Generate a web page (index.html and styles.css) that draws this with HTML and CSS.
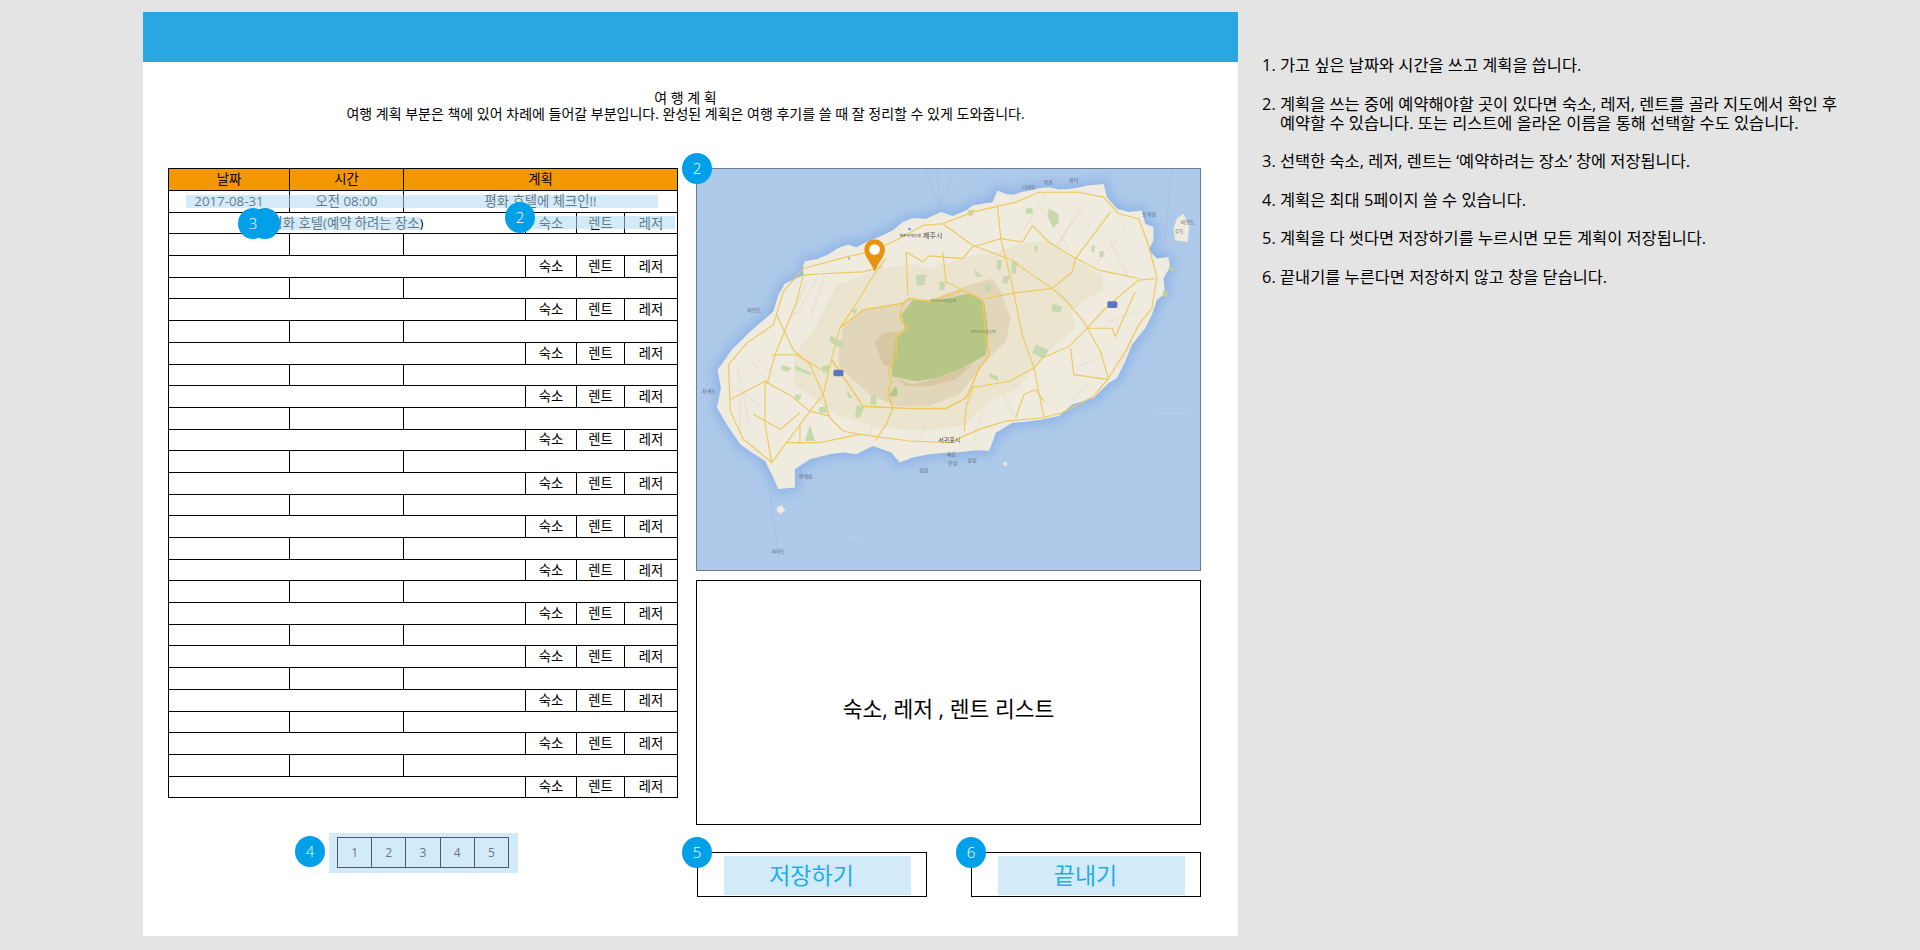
FILE: index.html
```html
<!DOCTYPE html>
<html lang="ko">
<head>
    <meta charset="UTF-8">
    <meta name="viewport" content="width=device-width, initial-scale=1.0">
    <title>여행 계획</title>
    <link rel="stylesheet" href="styles.css">
</head>
<body>
    <div class="wrap">
        <div class="page">
            <div class="topbar"></div>

            <div class="intro">
                <p>여 행 계 획</p>
                <p>여행 계획 부분은 책에 있어 차례에 들어갈 부분입니다. 완성된 계획은 여행 후기를 쓸 때 잘 정리할 수 있게 도와줍니다.</p>
            </div>

            <div class="work">
                <div class="left">
                    <div class="plan">
                        <table class="plan-table">
                            <colgroup>
                                <col class="c1"><col class="c2"><col class="c3"><col class="c4"><col class="c5"><col class="c6">
                            </colgroup>
                            <tr class="head"><th>날짜</th><th>시간</th><th colspan="4">계획</th></tr>
                            <tr><td>2017-08-31</td><td>오전 08:00</td><td colspan="4">평화 호텔에 체크인!!</td></tr>
                            <tr><td colspan="3">평화 호텔(예약 하려는 장소)</td><td>숙소</td><td>렌트</td><td>레저</td></tr>
                            <tr><td></td><td></td><td colspan="4"></td></tr>
                            <tr><td colspan="3"></td><td>숙소</td><td>렌트</td><td>레저</td></tr>
                            <tr><td></td><td></td><td colspan="4"></td></tr>
                            <tr><td colspan="3"></td><td>숙소</td><td>렌트</td><td>레저</td></tr>
                            <tr><td></td><td></td><td colspan="4"></td></tr>
                            <tr><td colspan="3"></td><td>숙소</td><td>렌트</td><td>레저</td></tr>
                            <tr><td></td><td></td><td colspan="4"></td></tr>
                            <tr><td colspan="3"></td><td>숙소</td><td>렌트</td><td>레저</td></tr>
                            <tr><td></td><td></td><td colspan="4"></td></tr>
                            <tr><td colspan="3"></td><td>숙소</td><td>렌트</td><td>레저</td></tr>
                            <tr><td></td><td></td><td colspan="4"></td></tr>
                            <tr><td colspan="3"></td><td>숙소</td><td>렌트</td><td>레저</td></tr>
                            <tr><td></td><td></td><td colspan="4"></td></tr>
                            <tr><td colspan="3"></td><td>숙소</td><td>렌트</td><td>레저</td></tr>
                            <tr><td></td><td></td><td colspan="4"></td></tr>
                            <tr><td colspan="3"></td><td>숙소</td><td>렌트</td><td>레저</td></tr>
                            <tr><td></td><td></td><td colspan="4"></td></tr>
                            <tr><td colspan="3"></td><td>숙소</td><td>렌트</td><td>레저</td></tr>
                            <tr><td></td><td></td><td colspan="4"></td></tr>
                            <tr><td colspan="3"></td><td>숙소</td><td>렌트</td><td>레저</td></tr>
                            <tr><td></td><td></td><td colspan="4"></td></tr>
                            <tr><td colspan="3"></td><td>숙소</td><td>렌트</td><td>레저</td></tr>
                            <tr><td></td><td></td><td colspan="4"></td></tr>
                            <tr><td colspan="3"></td><td>숙소</td><td>렌트</td><td>레저</td></tr>
                            <tr><td></td><td></td><td colspan="4"></td></tr>
                            <tr><td colspan="3"></td><td>숙소</td><td>렌트</td><td>레저</td></tr>
                        </table>

                        <!-- highlights over the filled in rows -->
                        <div class="mark mark-row"></div>
                        <div class="mark mark-place"></div>
                        <div class="mark mark-kinds"></div>

                        <span class="badge badge-3b"></span>
                        <span class="badge badge-3">3</span>
                        <span class="badge badge-2">2</span>
                    </div>

                    <div class="pager-row">
                        <span class="badge badge-4">4</span>
                        <div class="pager">
                            <span>1</span><span>2</span><span>3</span><span>4</span><span>5</span>
                        </div>
                    </div>
                </div>

                <div class="right">
                    <div class="map">
                        <svg class="map-svg" viewBox="0 0 1515 1209" preserveAspectRatio="none" xmlns="http://www.w3.org/2000/svg">
                            <defs>
                                <filter id="glow" x="-10%" y="-10%" width="120%" height="120%"><feGaussianBlur stdDeviation="18"/></filter>
                                <filter id="soft" x="-5%" y="-5%" width="110%" height="110%"><feGaussianBlur stdDeviation="1.3"/></filter>
                                <path id="coast" d="M320,290 L325,278 360,272 395,258 425,238 455,228 480,236 500,225 530,212 560,200 590,185 620,160 650,148 690,150 735,130 770,142 810,125 830,110 860,105 890,100 905,65 930,75 955,78 975,70 1000,65 1030,58 1060,55 1090,62 1120,60 1150,56 1175,50 1225,45 1235,85 1265,120 1300,130 1340,125 1350,165 1375,175 1375,215 1360,245 1385,270 1420,265 1425,295 1405,330 1410,375 1385,395 1370,440 1350,480 1310,530 1290,580 1265,630 1240,645 1195,690 1130,710 1090,745 1040,755 990,762 950,765 900,795 880,850 850,848 820,850 780,855 740,856 700,860 650,870 610,885 585,855 530,835 480,860 440,855 400,860 340,875 295,905 295,960 245,965 225,920 205,880 165,855 130,830 90,770 60,720 72,660 62,605 105,545 155,495 195,460 230,430 245,380 265,345 320,320 Z"/>
                            </defs>

                            <rect width="1515" height="1209" fill="#aec9e9"/>
                            <use href="#coast" fill="#8db4e6" stroke="#8db4e6" stroke-width="26" filter="url(#glow)"/>

                            <!-- ferry lines and tile edges on the sea -->
                            <g fill="none" stroke="#9db7d8" stroke-width="1.5">
                                <path d="M685,0 L730,112 M725,0 L730,112 M780,0 L730,112 M1428,0 L1405,270 M215,940 L245,1170"/>
                                <path d="M455,1175 L455,1108 500,1108 M1383,900 L1383,738 1480,738" stroke="#c1d5ee"/>
                            </g>

                            <g filter="url(#soft)">
                                <use href="#coast" fill="#efebdf"/>
                                <path d="M1445,150 L1465,135 1482,170 1478,220 1440,215 1435,180 Z M242,1020 L255,1014 266,1028 252,1040 240,1030 Z M923,884 L933,884 933,894 923,894 Z" fill="#efebdf"/>

                                <!-- hallasan height bands -->
                                <path d="M290,650 L295,560 360,470 420,350 560,300 640,285 700,300 830,260 900,250 990,220 1060,220 1130,270 1220,320 1225,365 1160,400 1130,430 1140,480 1080,530 1020,590 970,660 880,700 810,770 700,790 540,780 420,740 350,690 Z" fill="#ebe5d0"/>
                                <path d="M425,565 L440,480 500,425 610,405 640,390 700,395 820,350 890,330 915,370 945,450 930,520 880,570 840,620 790,680 700,715 600,715 520,680 430,600 Z" fill="#e2d6ba"/>
                                <path d="M535,520 L560,495 610,490 590,600 560,590 Z M600,630 L650,650 710,635 830,590 780,635 700,655 630,655 Z" fill="#d9c6a3"/>
                                <path d="M615,440 L650,395 730,395 820,375 865,400 878,500 870,560 800,600 720,630 660,640 585,625 595,520 625,480 Z" fill="#b6c684"/>
                                <path d="M578,680 L600,655 605,680 590,688 Z" fill="#b6c684"/>

                                <!-- patches of forest -->
                                <path d="M1060,118 L1088,135 1090,160 1072,178 1056,140 Z M990,118 L1010,118 1012,135 992,135 Z M815,125 L835,122 830,142 815,140 Z M1020,530 L1060,545 1045,572 1010,555 Z M1070,405 L1100,415 1095,432 1068,428 Z M255,590 L285,600 275,612 255,605 Z M295,592 L345,615 345,622 295,605 Z M375,595 L400,590 395,612 380,615 Z M325,820 L340,772 356,820 Z M480,712 L505,715 490,752 476,748 Z M525,680 L540,680 540,712 522,710 Z M450,665 L470,690 455,690 Z M400,500 L450,530 430,540 400,520 Z M465,425 L485,420 475,440 Z M660,320 L690,318 685,350 662,350 Z M730,340 L748,340 745,365 730,365 Z M835,300 L860,325 840,325 Z M870,345 L890,350 880,372 866,370 Z M903,275 L918,275 915,305 905,305 Z M948,280 L965,280 960,315 948,315 Z M922,325 L942,320 935,345 920,345 Z M880,615 L905,625 910,640 885,632 Z M1016,232 L1026,230 1024,248 1016,248 Z M1188,232 L1198,230 1196,250 1188,250 Z M1212,248 L1226,248 1224,265 1212,265 Z M295,680 L315,680 310,695 296,695 Z M368,718 L390,716 390,735 368,735 Z" fill="#c6d8ad"/>
                                <path d="M1405,365 L1420,370 1416,388 1402,384 Z M1420,290 L1440,302 1428,310 Z" fill="#b9cf9c"/>

                                <!-- small roads -->
                                <g fill="none" stroke="#d6d1c1" stroke-width="1.5">
                                    <path d="M330,340 L290,440 M385,320 L340,450 M120,590 L160,780 M150,560 L230,660 M100,650 L200,720 M1040,120 L1120,240 M1240,210 L1300,330 M1170,110 L1080,230 M1240,460 L1320,430 M1140,600 L1230,560 M980,190 L1050,75 M860,730 L830,830 M690,750 L675,815 M540,740 L520,805 M1050,300 L1150,120 M1180,640 L1130,700 M920,680 L960,750 M130,680 L130,800 M250,640 L170,560 M300,440 L360,330 M1290,180 L1200,290 M1310,520 L1270,600 M930,560 L960,620"/>
                                </g>

                                <!-- main roads -->
                                <g fill="none" stroke="#edc95f" stroke-width="3.5" stroke-linejoin="round">
                                    <path d="M95,590 L150,525 230,470 260,370 320,300 450,265 520,250 600,215 680,170 740,165 830,130 960,100 1030,70 1150,70 1225,85 1270,135 1330,150 1360,230 1385,325 1370,420 1330,470 1290,550 1240,630 1195,685 1100,735 1040,750 930,760 850,785 760,825 640,820 490,800 370,825 270,825 225,885 140,815 100,730 95,590"/>
                                    <path d="M430,480 L470,420 545,300 570,270"/>
                                    <path d="M630,250 L635,380"/>
                                    <path d="M740,250 L750,340 800,365"/>
                                    <path d="M905,110 L915,210 945,330 980,500 1015,600 1045,750"/>
                                    <path d="M870,390 L950,375 1070,360 1130,310 1140,270 1245,130"/>
                                    <path d="M1070,360 L1110,395 1165,460 1215,550 1240,635"/>
                                    <path d="M1380,330 L1330,335 1240,410 1175,480 1120,535 1040,570 1015,600 940,640 825,660"/>
                                    <path d="M1140,268 L1210,305 1330,330"/>
                                    <path d="M740,165 L830,230 950,275 1010,320 1070,360"/>
                                    <path d="M320,320 L390,315 500,310 560,295"/>
                                    <path d="M630,250 L680,280 700,262 800,270 830,235 915,210 980,220 1010,170 1060,220 1140,270"/>
                                    <path d="M590,720 L570,770 535,820"/>
                                    <path d="M830,660 L810,720 805,790"/>
                                    <path d="M240,440 L290,545 340,590 380,680 400,750 440,790 490,800"/>
                                    <path d="M100,695 L205,640 285,685 340,730 400,745"/>
                                    <path d="M170,740 L250,785 310,735"/>
                                    <path d="M205,640 L205,770 225,885"/>
                                    <path d="M225,560 L300,560 375,605"/>
                                    <path d="M320,320 L300,400 235,560 210,650"/>
                                    <path d="M430,480 L405,575 380,680 340,730 270,825"/>
                                    <path d="M1125,540 L1135,620 1240,635"/>
                                    <path d="M1175,480 L1250,480 1260,505 1320,370"/>
                                    <path d="M960,750 L985,680 1020,665 1045,700"/>
                                    <path d="M310,770 L310,825 360,825"/>
                                </g>

                                <!-- roads round the mountain -->
                                <g fill="none" stroke="#f0c65a" stroke-width="4.5" stroke-linejoin="round">
                                    <path d="M430,480 L500,425 620,405 640,390 700,400 800,365 860,395 870,500 880,560 850,600 825,660 810,690 750,722 640,722 590,720 500,715 440,625 405,575"/>
                                    <path d="M620,405 L610,450 635,480 600,500 600,560 575,610 585,640 575,680 590,720"/>
                                </g>
                            </g>

                            <!-- route shields -->
                            <rect x="411" y="605" width="30" height="20" rx="5" fill="#5a78c0"/>
                            <rect x="1236" y="399" width="30" height="20" rx="5" fill="#5a78c0"/>
                            <circle cx="640" cy="181" r="4" fill="#3aa6e8"/>
                            <circle cx="458" cy="270" r="3" fill="#6f9fe0"/>

                            <g class="map-labels">
                                <text x="710" y="207" class="city">제주시</text>
                                <text x="642" y="205" class="tiny">제주국제공항</text>
                                <text x="760" y="823" class="city2">서귀포시</text>
                                <text x="742" y="401" class="park">한라산국립공원</text>
                                <text x="862" y="493" class="park">한라산국립공원</text>
                                <text x="172" y="431">비양도</text>
                                <text x="36" y="676">차귀도</text>
                                <text x="327" y="933">형제섬</text>
                                <text x="683" y="913">범섬</text>
                                <text x="765" y="866">새섬</text>
                                <text x="770" y="891">문섬</text>
                                <text x="828" y="883">섶섬</text>
                                <text x="245" y="1157">마라도</text>
                                <text x="1362" y="142">토끼섬</text>
                                <text x="1453" y="192">우도</text>
                                <text x="1478" y="166">비양도</text>
                                <text x="1000" y="61">다려도</text>
                                <text x="1058" y="46">북촌</text>
                                <text x="1135" y="38">함덕</text>
                            </g>

                            <!-- selected place -->
                            <path d="M535,310 C524,280 504,265 504,243 A31,31 0 0 1 566,243 C566,265 546,280 535,310 Z" fill="#ea9310"/>
                            <circle cx="535" cy="243" r="16" fill="#fff"/>
                        </svg>
                        <span class="badge badge-corner">2</span>
                    </div>

                    <div class="list-box">숙소, 레저 , 렌트 리스트</div>

                    <div class="actions">
                        <div class="action">
                            <span class="badge badge-corner">5</span>
                            <button class="action-btn">저장하기</button>
                        </div>
                        <div class="action">
                            <span class="badge badge-corner">6</span>
                            <button class="action-btn">끝내기</button>
                        </div>
                    </div>
                </div>
            </div>
        </div>

        <ol class="notes">
            <li>가고 싶은 날짜와 시간을 쓰고 계획을 씁니다.</li>
            <li>계획을 쓰는 중에 예약해야할 곳이 있다면 숙소, 레저, 렌트를 골라 지도에서 확인 후 예약할 수 있습니다. 또는 리스트에 올라온 이름을 통해 선택할 수도 있습니다.</li>
            <li>선택한 숙소, 레저, 렌트는 ‘예약하려는 장소’ 창에 저장됩니다.</li>
            <li>계획은 최대 5페이지 쓸 수 있습니다.</li>
            <li>계획을 다 썻다면 저장하기를 누르시면 모든 계획이 저장됩니다.</li>
            <li>끝내기를 누른다면 저장하지 않고 창을 닫습니다.</li>
        </ol>
    </div>
</body>
</html>
```

FILE: styles.css
```css
* {
    box-sizing: border-box;
}
html, body {
    height: 100%;
}
body {
    margin: 0;
    background-color: #e4e4e4;
    color: #000;
    font-family: "Open Sans", "Noto Sans CJK KR", sans-serif;
    overflow: hidden;
}
.wrap {
    display: flex;
    padding: 12px 0 0 143px;
}
.page {
    width: 1095px;
    height: 924px;
    background-color: #fff;
    flex-shrink: 0;
}
.topbar {
    height: 50px;
    background-color: #29a7e1;
}
.intro {
    padding: 28px 10px 0 0;
    height: 106px;
    text-align: center;
    font-size: 14px;
    line-height: 16px;
}
.intro p {
    margin: 0;
}

.work {
    display: flex;
    gap: 19px;
    padding-left: 25px;
}
.left {
    width: 509px;
}
.right {
    width: 505px;
    display: flex;
    flex-direction: column;
}

/* plan table */
.plan {
    position: relative;
}
.plan-table {
    width: 509px;
    table-layout: fixed;
    border-collapse: collapse;
    font-size: 13.3px;
}
.plan-table .c1 { width: 121px; }
.plan-table .c2 { width: 114px; }
.plan-table .c3 { width: 122px; }
.plan-table .c4 { width: 51px; }
.plan-table .c5 { width: 48px; }
.plan-table .c6 { width: 53px; }
.plan-table tr {
    height: 21.7px;
}
.plan-table th, .plan-table td {
    border: 1px solid #000;
    padding: 0 0 1px;
    text-align: center;
    font-weight: 400;
    line-height: 14px;
}
.plan-table .head {
    height: 22px;
}
.plan-table th {
    background-color: #f39800;
}

.mark {
    position: absolute;
    background-color: rgba(175, 219, 244, 0.55);
}
.mark-row {
    left: 18px;
    top: 27px;
    width: 472px;
    height: 13px;
}
.mark-place {
    left: 98px;
    top: 49px;
    width: 155px;
    height: 13px;
}
.mark-kinds {
    left: 365px;
    top: 48px;
    width: 142px;
    height: 13px;
}

/* numbered markers */
.badge {
    position: absolute;
    width: 30px;
    height: 31px;
    border-radius: 50%;
    background-color: #00a0e9;
    color: #fff;
    font-size: 15px;
    font-weight: 300;
    line-height: 31px;
    text-align: center;
    z-index: 2;
}
.badge-3 { left: 70px; top: 40px; }
.badge-3b { left: 82px; top: 40px; }
.badge-2 { left: 337px; top: 34px; }
.badge-4 { left: 127px; top: 3px; }
.badge-corner { left: -15px; top: -16px; }
.action .badge-corner { left: -16px; }

/* pager */
.pager-row {
    position: relative;
    display: flex;
    justify-content: center;
    margin-top: 35px;
    padding-left: 2px;
}
.pager {
    display: flex;
    width: 189px;
    height: 40px;
    padding: 4px 9px 5px 8px;
    background-color: #d3ebf9;
}
.pager span {
    flex: 1;
    border: 1px solid #4a5a68;
    border-left-width: 0;
    color: #6a7680;
    font-size: 12px;
    line-height: 29px;
    text-align: center;
}
.pager span:first-child {
    border-left-width: 1px;
}

/* map and list */
.map {
    position: relative;
    height: 403px;
    border: 1px solid #6a7d92;
}
.map-svg {
    display: block;
    width: 100%;
    height: 100%;
}
.map-labels text {
    font-family: "Noto Sans CJK KR", sans-serif;
    font-size: 15px;
    fill: #5e6470;
    text-anchor: middle;
}
.map-labels .city {
    font-size: 21px;
    fill: #444;
}
.map-labels .city2 {
    font-size: 18px;
    fill: #444;
}
.map-labels .tiny {
    font-size: 12px;
    fill: #444;
}
.map-labels .park {
    font-size: 12px;
    fill: #5f8a4e;
}
.list-box {
    display: flex;
    align-items: center;
    justify-content: center;
    height: 245px;
    margin-top: 9px;
    padding-top: 9px;
    border: 1px solid #000;
    font-size: 21.5px;
}
.actions {
    display: flex;
    justify-content: space-between;
    margin: 27px 0 0 1px;
}
.action {
    position: relative;
    width: 230px;
    height: 45px;
    padding: 3px 15px 1px 26px;
    border: 1px solid #000;
}
.action-btn {
    display: block;
    width: 100%;
    height: 100%;
    border: none;
    padding: 0 12px 4px 0;
    background-color: #d3ebf9;
    color: #1faee8;
    font-family: inherit;
    font-size: 23px;
}

/* notes on the right */
.notes {
    margin: 43px 0 0 23px;
    padding: 0 0 0 19px;
    width: 610px;
    font-size: 16.4px;
    line-height: 19px;
    word-break: keep-all;
}
.notes li {
    margin-bottom: 19.5px;
}
```
